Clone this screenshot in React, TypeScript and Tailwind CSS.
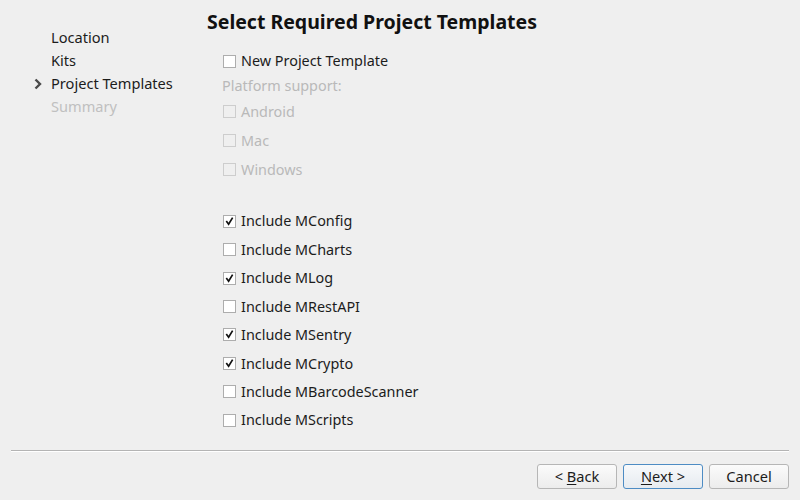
import React from "react";

const font = { fontFamily: '"Noto Sans", "Open Sans", sans-serif' };

function Check({ checked, disabled }: { checked?: boolean; disabled?: boolean }) {
  return (
    <div
      className={
        "w-[13px] h-[13px] border flex items-center justify-center shrink-0 " +
        (disabled ? "border-[#cdcdcd] bg-[#efefef]" : "border-[#adadad] bg-white")
      }
    >
      {checked && (
        <svg width="9" height="9" viewBox="0 0 9 9">
          <path d="M1.8 4.8 L3.6 7.3 L7.2 1.3" fill="none" stroke="#111" strokeWidth="1.7" strokeLinecap="square" />
        </svg>
      )}
    </div>
  );
}

function Row({ label, checked, disabled, h }: { label: string; checked?: boolean; disabled?: boolean; h: string }) {
  return (
    <div className={"flex items-center pl-[16px] " + h}>
      <Check checked={checked} disabled={disabled} />
      <span className={"ml-[5px] text-[14.4px] " + (disabled ? "text-[#b9b9b9]" : "text-[#1c1c1c]")}>{label}</span>
    </div>
  );
}

export default function App() {
  const items: [string, boolean][] = [
    ["Include MConfig", true],
    ["Include MCharts", false],
    ["Include MLog", true],
    ["Include MRestAPI", false],
    ["Include MSentry", true],
    ["Include MCrypto", true],
    ["Include MBarcodeScanner", false],
    ["Include MScripts", false],
  ];
  return (
    <div className="w-[800px] h-[500px] bg-[#efefef] flex flex-col overflow-hidden" style={font}>
      <div className="flex flex-row flex-1">
        <div className="w-[207px] pt-[26px] text-[14.6px]">
          {["Location", "Kits", "Project Templates", "Summary"].map((t, i) => (
            <div key={t} className="h-[23px] flex items-center pl-[33px]">
              <div className="w-[18px] flex items-center">
                {i === 2 && (
                  <svg width="10" height="12" viewBox="0 0 10 12">
                    <path d="M2.5 1.5 L7 6 L2.5 10.5" fill="none" stroke="#4a4a4a" strokeWidth="2.4" />
                  </svg>
                )}
              </div>
              <span className={i === 3 ? "text-[#c0c0c0]" : "text-[#1c1c1c]"}>{t}</span>
            </div>
          ))}
        </div>
        <div className="flex flex-col">
          <div className="mt-[11px] h-[22px] leading-[22px] text-[19.5px] font-bold text-[#111]">
            Select Required Project Templates
          </div>
          <div className="mt-[14px]">
            <Row label="New Project Template" h="h-[28px]" />
            <div className="h-[22px] flex items-center pl-[15px] text-[14.4px] text-[#b9b9b9]">Platform support:</div>
            <Row label="Android" disabled h="h-[29px]" />
            <Row label="Mac" disabled h="h-[29px]" />
            <Row label="Windows" disabled h="h-[29px]" />
            <div className="h-[23px]" />
            {items.map(([t, c]) => (
              <Row key={t} label={t} checked={c} h="h-[28.45px]" />
            ))}
          </div>
        </div>
      </div>
      <div className="px-[11px] pb-[11px]">
        <div className="h-0 border-t border-b border-t-[#b4b4b4] border-b-white" />
        <div className="flex justify-end gap-[6px] mt-[12px] text-[14.6px] text-[#1c1c1c]">
          <button className="w-[80px] h-[25px] rounded-[3px] border border-[#b6b6b6] bg-gradient-to-b from-[#fbfbfb] to-[#ececec] flex items-center justify-center">
            &lt;&nbsp;<span className="underline underline-offset-2">B</span>ack
          </button>
          <button className="w-[80px] h-[25px] rounded-[3px] border border-[#4d8cc4] bg-gradient-to-b from-[#f7f9fb] to-[#e6ebf0] flex items-center justify-center">
            <span className="underline underline-offset-2">N</span>ext &gt;
          </button>
          <button className="w-[80px] h-[25px] rounded-[3px] border border-[#b6b6b6] bg-gradient-to-b from-[#fbfbfb] to-[#ececec] flex items-center justify-center">
            Cancel
          </button>
        </div>
      </div>
    </div>
  );
}
